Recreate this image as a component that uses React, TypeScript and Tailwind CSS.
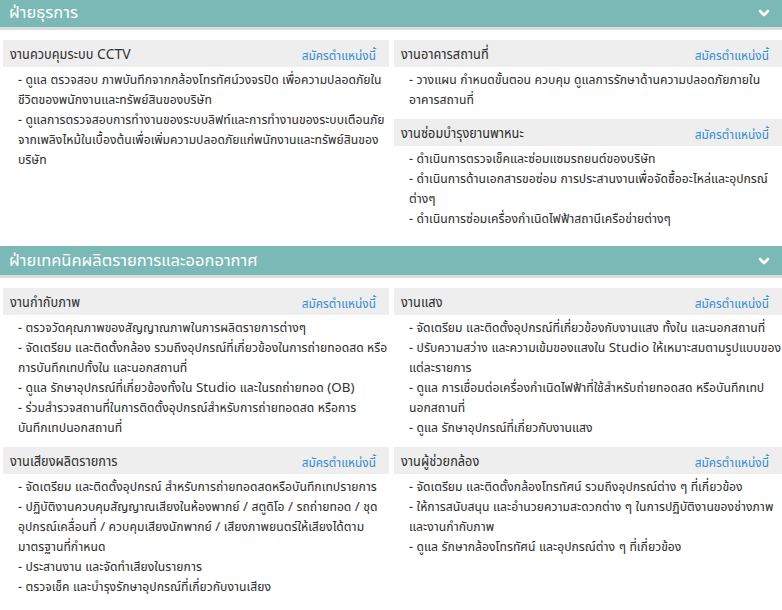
import { ChevronDown } from 'lucide-react';

// each duty is split into the lines as they wrap on the page
type Job = {
  title: string;
  duties: string[][];
};

type Section = {
  title: string;
  columns: Job[][];
};

const SECTIONS: Section[] = [
  {
    title: 'ฝ่ายธุรการ',
    columns: [
      [
        {
          title: 'งานควบคุมระบบ CCTV',
          duties: [
            ['- ดูแล ตรวจสอบ ภาพบันทึกจากกล้องโทรทัศน์วงจรปิด เพื่อความปลอดภัยใน', 'ชีวิตของพนักงานและทรัพย์สินของบริษัท'],
            [
              '- ดูแลการตรวจสอบการทำงานของระบบลิฟท์และการทำงานของระบบเตือนภัย',
              'จากเพลิงไหม้ในเบื้องต้นเพื่อเพิ่มความปลอดภัยแก่พนักงานและทรัพย์สินของ',
              'บริษัท',
            ],
          ],
        },
      ],
      [
        {
          title: 'งานอาคารสถานที่',
          duties: [['- วางแผน กำหนดขั้นตอน ควบคุม ดูแลการรักษาด้านความปลอดภัยภายใน', 'อาคารสถานที่']],
        },
        {
          title: 'งานซ่อมบำรุงยานพาหนะ',
          duties: [
            ['- ดำเนินการตรวจเช็คและซ่อมแซมรถยนต์ของบริษัท'],
            ['- ดำเนินการด้านเอกสารขอซ่อม การประสานงานเพื่อจัดซื้ออะไหล่และอุปกรณ์', 'ต่างๆ'],
            ['- ดำเนินการซ่อมเครื่องกำเนิดไฟฟ้าสถานีเครือข่ายต่างๆ'],
          ],
        },
      ],
    ],
  },
  {
    title: 'ฝ่ายเทคนิคผลิตรายการและออกอากาศ',
    columns: [
      [
        {
          title: 'งานกำกับภาพ',
          duties: [
            ['- ตรวจวัดคุณภาพของสัญญาณภาพในการผลิตรายการต่างๆ'],
            ['- จัดเตรียม และติดตั้งกล้อง รวมถึงอุปกรณ์ที่เกี่ยวข้องในการถ่ายทอดสด หรือ', 'การบันทึกเทปทั้งใน และนอกสถานที่'],
            ['- ดูแล รักษาอุปกรณ์ที่เกี่ยวข้องทั้งใน Studio และในรถถ่ายทอด (OB)'],
            ['- ร่วมสำรวจสถานที่ในการติดตั้งอุปกรณ์สำหรับการถ่ายทอดสด หรือการ', 'บันทึกเทปนอกสถานที่'],
          ],
        },
        {
          title: 'งานเสียงผลิตรายการ',
          duties: [
            ['- จัดเตรียม และติดตั้งอุปกรณ์ สำหรับการถ่ายทอดสดหรือบันทึกเทปรายการ'],
            [
              '- ปฏิบัติงานควบคุมสัญญาณเสียงในห้องพากย์ / สตูดิโอ / รถถ่ายทอด / ชุด',
              'อุปกรณ์เคลื่อนที่ / ควบคุมเสียงนักพากย์ / เสียงภาพยนตร์ให้เสียงได้ตาม',
              'มาตรฐานที่กำหนด',
            ],
            ['- ประสานงาน และจัดทำเสียงในรายการ'],
            ['- ตรวจเช็ค และบำรุงรักษาอุปกรณ์ที่เกี่ยวกับงานเสียง'],
          ],
        },
      ],
      [
        {
          title: 'งานแสง',
          duties: [
            ['- จัดเตรียม และติดตั้งอุปกรณ์ที่เกี่ยวข้องกับงานแสง ทั้งใน และนอกสถานที่'],
            ['- ปรับความสว่าง และความเข้มของแสงใน Studio ให้เหมาะสมตามรูปแบบของ', 'แต่ละรายการ'],
            ['- ดูแล การเชื่อมต่อเครื่องกำเนิดไฟฟ้าที่ใช้สำหรับถ่ายทอดสด หรือบันทึกเทป', 'นอกสถานที่'],
            ['- ดูแล รักษาอุปกรณ์ที่เกี่ยวกับงานแสง'],
          ],
        },
        {
          title: 'งานผู้ช่วยกล้อง',
          duties: [
            ['- จัดเตรียม และติดตั้งกล้องโทรทัศน์ รวมถึงอุปกรณ์ต่าง ๆ ที่เกี่ยวข้อง'],
            ['- ให้การสนับสนุน และอำนวยความสะดวกต่าง ๆ ในการปฏิบัติงานของช่างภาพ', 'และงานกำกับภาพ'],
            ['- ดูแล รักษากล้องโทรทัศน์ และอุปกรณ์ต่าง ๆ ที่เกี่ยวข้อง'],
          ],
        },
      ],
    ],
  },
];

function JobCard({ job }: { job: Job }) {
  return (
    <div className="mb-[10px]">
      <div className="h-[27px] bg-[#eeeeee] flex items-center justify-between pl-[7px] pr-[13px]">
        <span className="text-[14px] text-[#333333]">{job.title}</span>
        <a href="#" className="text-[13px] text-[#3d8ed0] mt-[4px]">
          สมัครตำแหน่งนี้
        </a>
      </div>
      <ul className="pl-[15px] pt-[2px] text-[13.4px] leading-[20px] text-[#333333]">
        {job.duties.map((lines) => (
          <li key={lines[0]}>
            {lines.map((line) => (
              <span key={line} className="block whitespace-nowrap">
                {line}
              </span>
            ))}
          </li>
        ))}
      </ul>
    </div>
  );
}

export default function App() {
  return (
    <div className="w-[782px] h-[610px] overflow-hidden bg-white [font-stretch:87%] font-['Noto_Sans_Thai_UI','Noto_Sans_Thai','Noto_Sans',sans-serif]">
      <div className="-mt-[2px]">
        {SECTIONS.map((section) => (
          <section key={section.title} className="mb-[8px]">
            {/* ── Section bar ── */}
            <div className="h-[29px] bg-[#7bb9b7] border-b-[3px] border-[#dcdcdc] box-content flex items-center justify-between pl-[9px] pr-[10px]">
              <h2 className="text-[16.5px] text-white leading-none [font-stretch:90%]">{section.title}</h2>
              <ChevronDown size={16} strokeWidth={4} className="text-white" />
            </div>

            <div className="grid grid-cols-[386px_388px] gap-x-[5px] pl-[3px] pt-[10px]">
              {section.columns.map((col, i) => (
                <div key={i}>
                  {col.map((job) => (
                    <JobCard key={job.title} job={job} />
                  ))}
                </div>
              ))}
            </div>
          </section>
        ))}
      </div>
    </div>
  );
}
